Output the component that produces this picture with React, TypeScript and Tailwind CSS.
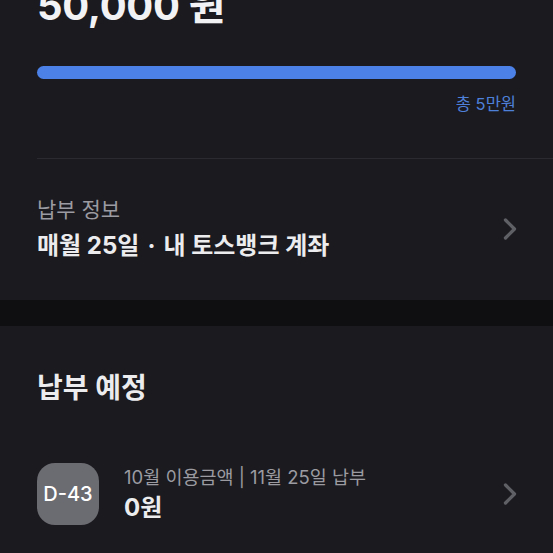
import React from "react";
import { ChevronRight } from "lucide-react";

const font = {
  fontFamily: '"Inter", "Noto Sans CJK KR", sans-serif',
};

const App = () => {
  return (
    <div
      style={font}
      className="w-[553px] h-[553px] overflow-hidden bg-[#0f0f12] text-white"
    >
      <section className="bg-[#1a1a1f] pb-[38px]">
        <div className="px-[37px]">
          <div className="-mt-[14px] text-[40px] font-bold leading-[40px] tracking-[-0.3px] text-[#f2f2f4]">
            50,000 원
          </div>

          <div className="mt-[40px] h-[13px] w-full rounded-full bg-[#4c82e8]" />

          <div className="mt-[15px] flex justify-end text-[16.5px] leading-[20px] text-[#4f80d9]">
            총 5만원
          </div>
        </div>

        <div className="ml-[37px] mt-[44px] h-px bg-[#2a2a30]" />

        <div className="mt-[37px] flex items-center justify-between px-[37px]">
          <div className="flex flex-col">
            <span className="text-[21px] leading-[28px] text-[#9b9ba1]">
              납부 정보
            </span>
            <span className="mt-[6px] text-[24px] font-bold leading-[32px] text-[#ececee]">
              매월 25일<span className="mx-[8px]">·</span>내 토스뱅크 계좌
            </span>
          </div>
          <ChevronRight className="mr-[-12px] size-[36px] text-[#5f5f66]" strokeWidth={2.2} />
        </div>
      </section>

      <section className="mt-[26px] bg-[#1a1a1f] px-[37px] pt-[44px] pb-[40px]">
        <h2 className="text-[28px] font-bold leading-[37px] text-[#ececee]">
          납부 예정
        </h2>

        <div className="mt-[56px] flex items-center justify-between">
          <div className="flex items-center gap-[25px]">
            <div className="flex size-[62px] items-center justify-center rounded-[18px] bg-[#6b6b72] text-[20px] font-medium text-white">
              D-43
            </div>
            <div className="flex flex-col">
              <span className="text-[18.5px] leading-[24px] text-[#9b9ba1]">
                10월 이용금액 | 11월 25일 납부
              </span>
              <span className="mt-[4px] text-[24px] font-bold leading-[30px] text-[#ececee]">
                0원
              </span>
            </div>
          </div>
          <ChevronRight className="mr-[-12px] size-[36px] text-[#5f5f66]" strokeWidth={2.2} />
        </div>
      </section>
    </div>
  );
};

export default App;
